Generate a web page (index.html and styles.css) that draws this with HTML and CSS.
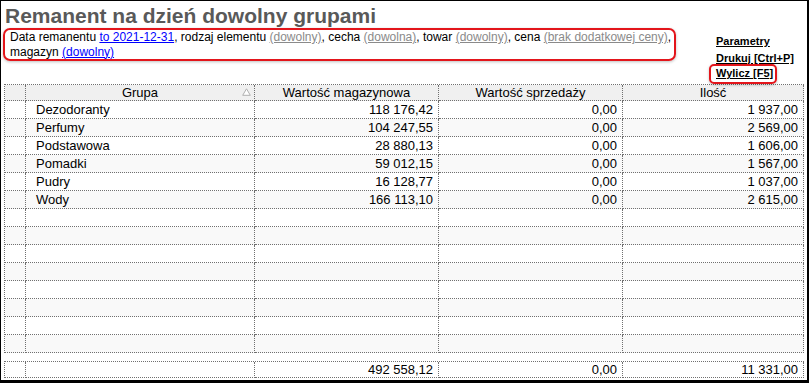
FILE: index.html
```html
<!DOCTYPE html>
<html lang="pl">
<head>
<meta charset="utf-8">
<title>Remanent na dzień dowolny grupami</title>
<link rel="stylesheet" href="styles.css">
</head>
<body>
<div class="frame">
  <div class="top">
    <div class="left">
      <h1 class="title">Remanent na dzień dowolny grupami</h1>
      <div class="info">Data remanentu <a class="lnk blue" href="#">to 2021-12-31</a>, rodzaj elementu <a class="lnk grey" href="#">(dowolny)</a>, cecha <a class="lnk grey" href="#">(dowolna)</a>, towar <a class="lnk grey" href="#">(dowolny)</a>, cena <a class="lnk grey" href="#">(brak dodatkowej ceny)</a>,<br>magazyn <a class="lnk blue" href="#">(dowolny)</a></div>
    </div>
    <div class="actions">
      <a class="act" href="#">Parametry</a>
      <a class="act" href="#">Drukuj [Ctrl+P]</a>
      <a class="act boxed" href="#">Wylicz [F5]</a>
    </div>
  </div>

  <table class="grid">
    <colgroup>
      <col class="c0"><col class="c1"><col class="c2"><col class="c3"><col class="c4">
    </colgroup>
    <thead>
      <tr class="hdr">
        <th></th>
        <th class="sortable">Grupa<svg class="sort" width="9" height="8" viewBox="0 0 9 8"><path d="M4.5 0.8 L8.3 7.3 L0.7 7.3 Z" fill="#fff" stroke="#b0b0b0" stroke-width="1"/></svg></th>
        <th>Wartość magazynowa</th>
        <th>Wartość sprzedaży</th>
        <th>Ilość</th>
      </tr>
    </thead>
    <tbody>
      <tr><td></td><td class="txt">Dezodoranty</td><td class="num">118 176,42</td><td class="num">0,00</td><td class="num">1 937,00</td></tr>
      <tr><td></td><td class="txt">Perfumy</td><td class="num">104 247,55</td><td class="num">0,00</td><td class="num">2 569,00</td></tr>
      <tr><td></td><td class="txt">Podstawowa</td><td class="num">28 880,13</td><td class="num">0,00</td><td class="num">1 606,00</td></tr>
      <tr><td></td><td class="txt">Pomadki</td><td class="num">59 012,15</td><td class="num">0,00</td><td class="num">1 567,00</td></tr>
      <tr><td></td><td class="txt">Pudry</td><td class="num">16 128,77</td><td class="num">0,00</td><td class="num">1 037,00</td></tr>
      <tr><td></td><td class="txt">Wody</td><td class="num">166 113,10</td><td class="num">0,00</td><td class="num">2 615,00</td></tr>
      <tr><td></td><td></td><td></td><td></td><td></td></tr>
      <tr><td></td><td></td><td></td><td></td><td></td></tr>
      <tr><td></td><td></td><td></td><td></td><td></td></tr>
      <tr><td></td><td></td><td></td><td></td><td></td></tr>
      <tr><td></td><td></td><td></td><td></td><td></td></tr>
      <tr><td></td><td></td><td></td><td></td><td></td></tr>
      <tr><td></td><td></td><td></td><td></td><td></td></tr>
      <tr><td></td><td></td><td></td><td></td><td></td></tr>
    </tbody>
  </table>

  <table class="grid foot">
    <colgroup>
      <col class="c0"><col class="c1"><col class="c2"><col class="c3"><col class="c4">
    </colgroup>
    <tbody>
      <tr><td></td><td></td><td class="num">492 558,12</td><td class="num">0,00</td><td class="num">11 331,00</td></tr>
    </tbody>
  </table>
</div>
</body>
</html>
```
FILE: styles.css
```css
html, body {
  margin: 0;
  padding: 0;
  background: #fff;
}

.frame {
  width: 809px;
  height: 383px;
  box-sizing: border-box;
  border-style: solid;
  border-color: #000;
  border-width: 1px 2px 3px 1px;
  padding-left: 2px;
  font-family: "Liberation Sans", Arial, sans-serif;
  color: #000;
  overflow: hidden;
}

.top {
  display: flex;
  height: 83px;
}

.left {
  width: 673px;
  display: flex;
  flex-direction: column;
}

.title {
  margin: 3px 0 0 2px;
  font-size: 21px;
  line-height: 24px;
  font-weight: bold;
  color: #595959;
}

.info {
  box-sizing: border-box;
  width: 673px;
  border: 2px solid #e3151b;
  border-radius: 7px;
  padding: 0 1px 0 5px;
  font-size: 12px;
  line-height: 14.5px;
  white-space: nowrap;
  box-shadow: 0 1px 3px rgba(0, 0, 0, 0.25);
}

.lnk {
  text-decoration: underline;
}
.lnk.blue { color: #0000ff; }
.lnk.grey { color: #8a8a8a; }

.actions {
  margin-left: 40px;
  padding-top: 32px;
  display: flex;
  flex-direction: column;
  align-items: flex-start;
}

.act {
  display: block;
  font-size: 11px;
  line-height: 17px;
  font-weight: bold;
  color: #000;
  text-decoration: underline;
}

.act.boxed {
  margin-top: -3px;
  margin-left: -7px;
  line-height: 14px;
  padding: 0 2px 2px 5px;
  border: 2px solid #e3151b;
  border-radius: 5px;
  box-shadow: 0 1px 3px rgba(0, 0, 0, 0.25);
}

.grid {
  margin-left: 1px;
  width: 800px;
  table-layout: fixed;
  border-collapse: separate;
  border-spacing: 0;
  border-top: 1px dotted #707070;
  border-left: 1px dotted #707070;
  font-size: 13px;
}

.grid col.c0 { width: 21px; }
.grid col.c1 { width: 229px; }
.grid col.c2 { width: 184px; }
.grid col.c3 { width: 184px; }
.grid col.c4 { width: 181px; }

.grid th,
.grid td {
  border-right: 1px dotted #707070;
  border-bottom: 1px dotted #707070;
  padding: 0;
  line-height: 17px;
  white-space: nowrap;
  overflow: hidden;
}

.grid .hdr {
  height: 16px;
  background: #f0f0f0;
}

.grid th {
  font-weight: normal;
  text-align: center;
  line-height: 15px;
}

.grid .sortable {
  position: relative;
}

.sort {
  position: absolute;
  right: 3px;
  top: 3px;
}

.grid tbody tr {
  height: 18px;
}

.grid tbody tr:nth-child(even) {
  background: #f9f9f9;
}

.grid .txt {
  padding-left: 10px;
}

.grid .num {
  text-align: right;
  padding-right: 5px;
}

.grid.foot {
  margin-top: 8px;
}

.grid.foot tbody tr {
  height: 16px;
  background: #fff;
}

.grid.foot td {
  line-height: 15px;
}
```
